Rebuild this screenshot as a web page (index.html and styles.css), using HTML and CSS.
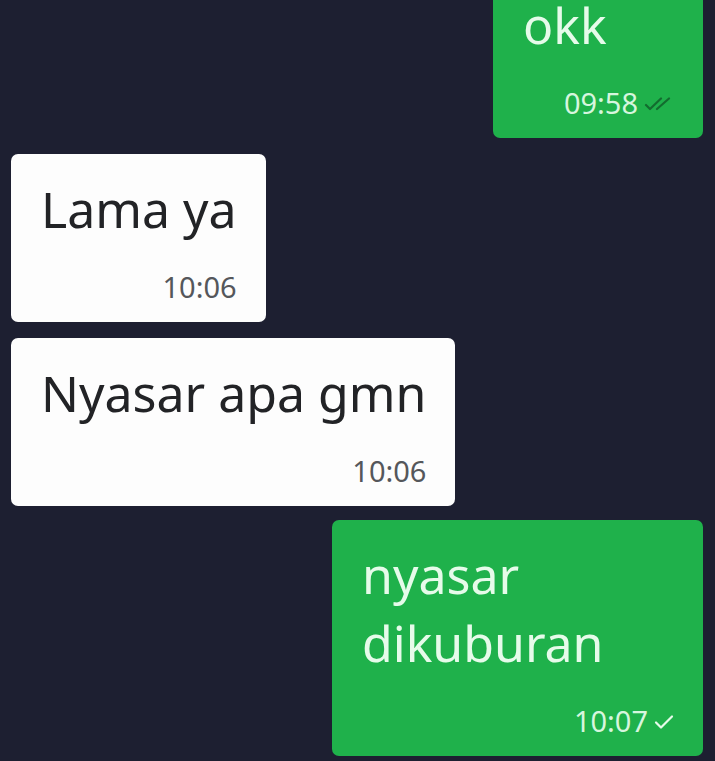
FILE: index.html
```html
<!DOCTYPE html>
<html lang="id">
<head>
<meta charset="UTF-8" />
<meta name="viewport" content="width=device-width, initial-scale=1" />
<title>Chat</title>
<link rel="stylesheet" href="styles.css">
</head>
<body>

<div class="chat">

  <div class="bubble out">
    <div class="text">okk</div>
    <div class="meta">
      <span>09:58</span>
      <svg class="tick read" width="30" height="14" viewBox="0 0 30 14">
        <path d="M2 8 L6 12 L17 1.5" />
        <path d="M13 12 L25 1.5" />
      </svg>
    </div>
  </div>

  <div class="bubble in">
    <div class="text">Lama ya</div>
    <div class="meta"><span>10:06</span></div>
  </div>

  <div class="bubble in">
    <div class="text">Nyasar apa gmn</div>
    <div class="meta"><span>10:06</span></div>
  </div>

  <div class="bubble out wrapped">
    <div class="text">nyasar<br>dikuburan</div>
    <div class="meta">
      <span>10:07</span>
      <svg class="tick" width="20" height="16" viewBox="0 0 20 16">
        <path d="M2 8.5 L7 13.5 L18 2.5" />
      </svg>
    </div>
  </div>

</div>

</body>
</html>
```
FILE: styles.css
```css
body {
  margin: 0;
  background-color: #1d1f31;
  font-family: "Noto Sans", "Open Sans", sans-serif;
  height: 100vh;
  overflow: hidden;
}

.chat {
  display: flex;
  flex-direction: column;
  gap: 16px;
  padding: 0 12px 0 11px;
  margin-top: -30px;
}

.bubble {
  box-sizing: border-box;
  min-width: 210px;
  padding: 21px 29px 18px 30px;
  border-radius: 7px;
}

.bubble.in {
  align-self: flex-start;
  background-color: #fdfdfd;
  color: #222326;
}

.bubble.out {
  align-self: flex-end;
  background-color: #1fb14b;
  color: #e6fbea;
}

.bubble.wrapped {
  width: 371px;
  margin-top: -2px;
}

.text {
  font-size: 50px;
  line-height: 68px;
  white-space: nowrap;
}

.meta {
  margin-top: 27px;
  display: flex;
  justify-content: flex-end;
  align-items: center;
  gap: 6px;
  font-size: 29px;
  line-height: 34px;
}

.bubble.in .meta {
  color: #55575b;
}

.bubble.out .meta {
  color: #d6f6de;
}

.tick {
  fill: none;
  stroke: #e6fbea;
  stroke-width: 2.2;
  stroke-linecap: round;
  stroke-linejoin: round;
  margin-top: 2px;
}

.tick.read {
  stroke: #136c2f;
}
```
